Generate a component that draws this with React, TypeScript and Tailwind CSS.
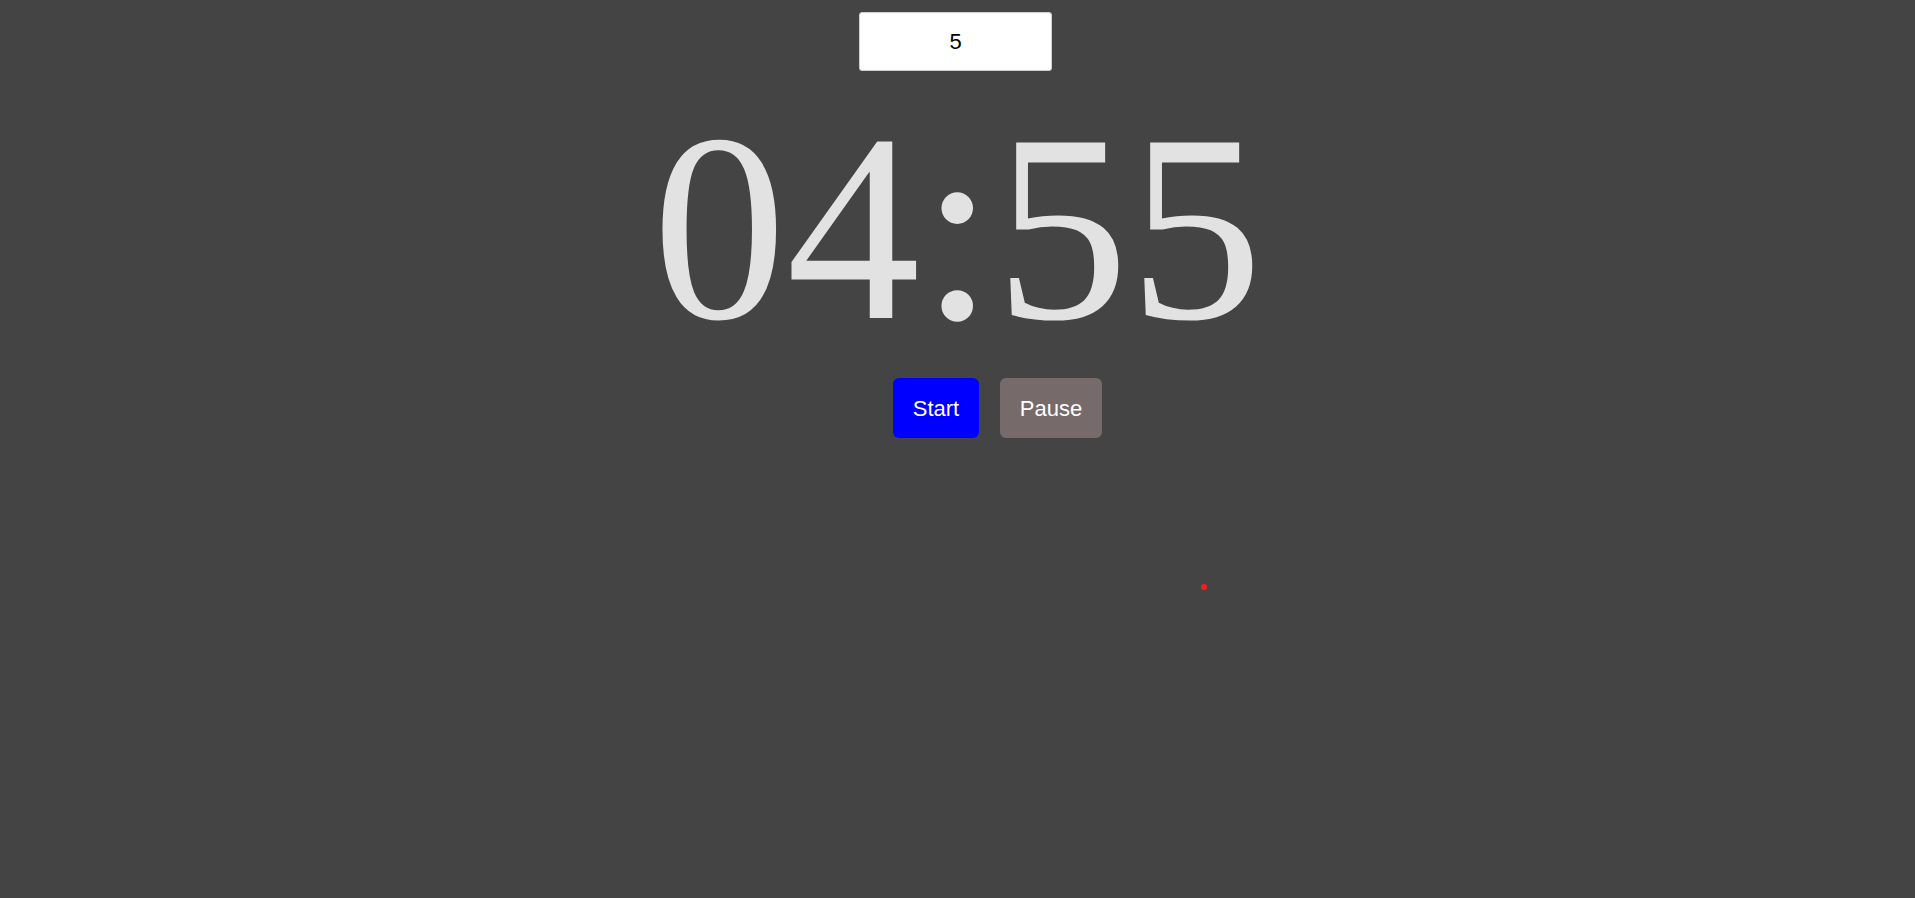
import { useState } from 'react';

export default function App() {
  const [minutes, setMinutes] = useState('5');

  return (
    <div className="relative min-h-screen w-full bg-[#444444] font-['Liberation_Sans',Arial,sans-serif]">
      <div className="flex flex-col items-center pt-3">
        {/* Minutes input */}
        <input
          type="text"
          value={minutes}
          onChange={(e) => setMinutes(e.target.value)}
          className="mr-[4px] h-[59px] w-[193px] rounded-[3px] border border-[#cfcfcf] bg-white text-center text-[22px] text-black outline-none"
        />

        {/* Countdown */}
        <div className="mt-[23px] font-['Liberation_Serif','Times_New_Roman',serif] text-[268px] leading-none text-[#e2e2e2]">
          04:55
        </div>

        {/* Controls */}
        <div className="mt-[16px] flex gap-[21px] pl-[80px]">
          <button className="h-[60px] w-[86px] rounded-md bg-[#0000ff] text-[22px] text-white">
            Start
          </button>
          <button className="h-[60px] w-[102px] rounded-md bg-[#776a6a] text-[22px] text-white">
            Pause
          </button>
        </div>
      </div>

      {/* stray dot */}
      <div className="absolute left-[1201px] top-[584px] h-[6px] w-[6px] rounded-full bg-[#ff1a1a]" />
    </div>
  );
}
